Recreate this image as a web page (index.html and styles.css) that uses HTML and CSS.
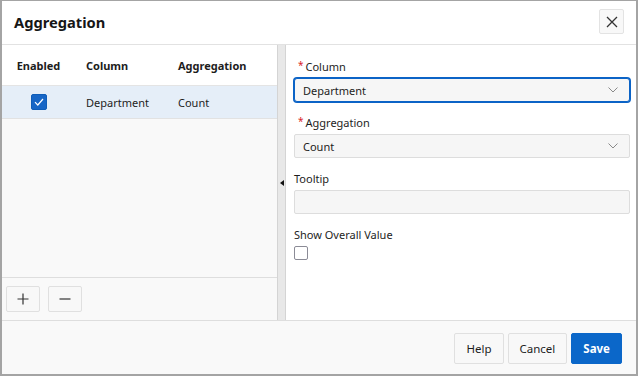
FILE: index.html
```html
<!DOCTYPE html>
<html>
<head>
<meta charset="utf-8">
<link rel="stylesheet" href="styles.css">
</head>
<body>
<div class="dialog">
  <div class="header">
    <h1 class="title">Aggregation</h1>
    <button class="close" aria-label="Close">
      <svg width="12" height="12" viewBox="0 0 12 12"><path d="M1 1 L11 11 M11 1 L1 11" stroke="#333" stroke-width="1.3" fill="none"/></svg>
    </button>
  </div>
  <div class="body">
    <div class="left">
      <div class="grid">
        <div class="grid-head">
          <div class="c1">Enabled</div>
          <div class="c2">Column</div>
          <div class="c3">Aggregation</div>
        </div>
        <div class="grid-row selected">
          <div class="c1"><span class="chk on"><svg width="10" height="8" viewBox="0 0 10 8"><path d="M1 4.2 L3.8 7 L9 1" stroke="#fff" stroke-width="1.2" fill="none"/></svg></span></div>
          <div class="c2">Department</div>
          <div class="c3">Count</div>
        </div>
      </div>
      <div class="toolbar">
        <button class="tbtn" aria-label="Add">
          <svg width="12" height="12" viewBox="0 0 12 12"><path d="M6 0.5 V11.5 M0.5 6 H11.5" stroke="#333" stroke-width="1.2" fill="none"/></svg>
        </button>
        <button class="tbtn" aria-label="Remove">
          <svg width="12" height="12" viewBox="0 0 12 12"><path d="M0.5 6 H11.5" stroke="#333" stroke-width="1.2" fill="none"/></svg>
        </button>
      </div>
    </div>
    <div class="splitter"><span class="arrow"></span></div>
    <div class="right">
      <div class="field">
        <label class="lbl req"><span class="ast">*</span>Column</label>
        <div class="select focus"><span>Department</span><svg class="chev" width="10" height="6" viewBox="0 0 10 6"><path d="M0.5 0.5 L5 5 L9.5 0.5" stroke="#8a8a8a" stroke-width="1" fill="none"/></svg></div>
      </div>
      <div class="field">
        <label class="lbl req"><span class="ast">*</span>Aggregation</label>
        <div class="select"><span>Count</span><svg class="chev" width="10" height="6" viewBox="0 0 10 6"><path d="M0.5 0.5 L5 5 L9.5 0.5" stroke="#8a8a8a" stroke-width="1" fill="none"/></svg></div>
      </div>
      <div class="field">
        <label class="lbl">Tooltip</label>
        <div class="input"></div>
      </div>
      <div class="field">
        <label class="lbl">Show Overall Value</label>
        <span class="chk off"></span>
      </div>
    </div>
  </div>
  <div class="footer">
    <button class="btn">Help</button>
    <button class="btn">Cancel</button>
    <button class="btn primary">Save</button>
  </div>
</div>
</body>
</html>
```

FILE: styles.css
```css
* { box-sizing: border-box; }
html, body { margin: 0; padding: 0; }
body {
  width: 638px;
  height: 376px;
  font-family: "Noto Sans", "Open Sans", sans-serif;
  font-size: 11px;
  color: #1d1d1d;
  background: #fff;
}
.dialog {
  width: 638px;
  height: 376px;
  border: 2px solid #a4a4a4;
  border-top-width: 1px;
  display: flex;
  flex-direction: column;
  background: #fff;
}
.header {
  height: 44px;
  flex: none;
  border-bottom: 1px solid #e2e2e2;
  display: flex;
  align-items: center;
  justify-content: space-between;
  padding: 0 12px 2px 12px;
}
.title {
  margin: 0;
  font-size: 14.7px;
  font-weight: 700;
  color: #161616;
}
.close {
  width: 25px;
  height: 25px;
  border: 1px solid #e3e3e3;
  background: #f8f8f8;
  border-radius: 2px;
  display: flex;
  align-items: center;
  justify-content: center;
  padding: 0;
}
.body {
  flex: 1;
  display: flex;
  border-bottom: 1px solid #dedede;
  min-height: 0;
}
.left {
  width: 275px;
  flex: none;
  background: #f9f9f9;
  display: flex;
  flex-direction: column;
}
.grid { flex: 1; }
.grid-head, .grid-row {
  display: grid;
  grid-template-columns: 73px 92px 1fr;
  align-items: center;
}
.grid-head {
  height: 41px;
  background: #fff;
  font-weight: 700;
  border-bottom: 1px solid #e4e4e4;
}
.grid-row {
  height: 33px;
  border-bottom: 1px solid #e2e2e2;
}
.grid-row.selected { background: #e5eef8; }
.c1 { text-align: center; display: flex; justify-content: center; align-items: center; }
.c2, .c3 { padding-left: 11px; }
.chk {
  display: inline-flex;
  align-items: center;
  justify-content: center;
  border-radius: 2px;
}
.chk.on {
  width: 16px;
  height: 16px;
  background: #1766c6;
  border: 1px solid #0f5db8;
}
.chk.off {
  width: 14px;
  height: 14px;
  border: 1.5px solid #8b8b96;
  background: #fff;
}
.toolbar {
  height: 43px;
  flex: none;
  border-top: 1px solid #dedede;
  display: flex;
  gap: 8px;
  padding: 8px 0 0 4px;
}
.tbtn {
  width: 34px;
  height: 26px;
  border: 1px solid #e0e0e0;
  background: #f8f8f8;
  border-radius: 2px;
  display: flex;
  align-items: center;
  justify-content: center;
  padding: 0;
}
.splitter {
  width: 9px;
  flex: none;
  background: #e8e8e8;
  border-left: 1px solid #d4d4d4;
  border-right: 1px solid #d4d4d4;
  display: flex;
  align-items: center;
  justify-content: flex-start;
  padding-left: 2px;
}
.arrow {
  width: 0;
  height: 0;
  border-top: 3.5px solid transparent;
  border-bottom: 3.5px solid transparent;
  border-right: 4px solid #111;
}
.right {
  flex: 1;
  padding: 14px 6px 0 8px;
  display: flex;
  flex-direction: column;
  gap: 13px;
}
.field { display: flex; flex-direction: column; align-items: stretch; }
.field .chk.off { align-self: flex-start; }
.lbl {
  display: block;
  height: 16px;
  line-height: 16px;
  margin-bottom: 3px;
  color: #1d1d1d;
}
.lbl.req { padding-left: 4px; }
.ast {
  color: #d9262a;
  font-size: 10px;
  vertical-align: top;
  line-height: 12px;
  margin-right: 2px;
}
.select, .input {
  height: 24px;
  border: 1px solid #dddddd;
  background: #f6f6f6;
  border-radius: 2px;
  display: flex;
  align-items: center;
  justify-content: space-between;
  padding: 0 10px 0 8px;
}
.select.focus {
  border: 1px solid #0b63c6;
  box-shadow: 0 0 0 1px #0b63c6;
  border-radius: 3px;
}
.chev { margin-right: 1px; }
.footer {
  height: 53px;
  flex: none;
  background: #f9f9f9;
  display: flex;
  justify-content: flex-end;
  gap: 4px;
  padding: 12px 14px 0 0;
}
.btn {
  height: 31px;
  padding: 0 11px;
  border: 1px solid #e0e0e0;
  background: #f8f8f8;
  border-radius: 2px;
  font-family: "Noto Sans", "Open Sans", sans-serif;
  font-size: 11.5px;
  color: #1d1d1d;
}
.btn.primary {
  background: #0b67c9;
  border-color: #0b67c9;
  color: #fff;
  font-weight: 700;
  padding: 0 11px;
}
```
